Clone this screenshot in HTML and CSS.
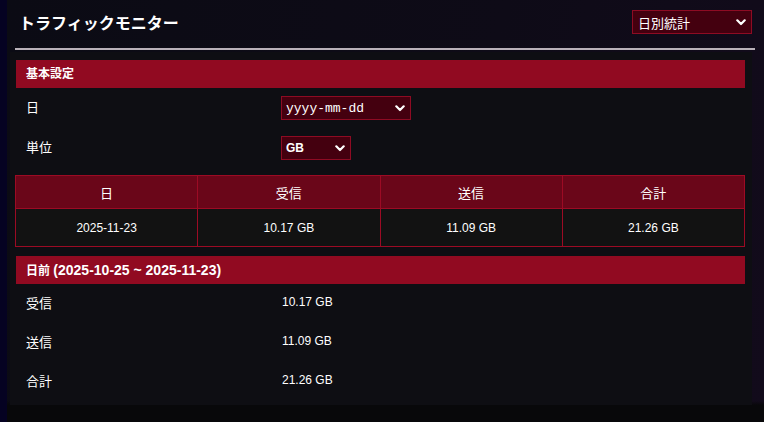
FILE: index.html
```html
<!DOCTYPE html>
<html lang="ja">
<head>
<meta charset="utf-8">
<title>トラフィックモニター</title>
<link rel="stylesheet" href="styles.css">
</head>
<body>
<div class="main">
  <header class="header">
    <h1 class="title">トラフィックモニター</h1>
    <div class="select select-mode">
      <span>日別統計</span>
      <svg class="chev" width="10" height="7" viewBox="0 0 10 7"><path d="M1.3 1.3 L5 5 L8.7 1.3" fill="none" stroke="#fff" stroke-width="2.2" stroke-linecap="round" stroke-linejoin="round"/></svg>
    </div>
  </header>
  <div class="panel">
    <div class="sec-title">基本設定</div>
    <div class="form-row">
      <div class="label">日</div>
      <div class="select select-date">
        <span>yyyy-mm-dd</span>
        <svg class="chev" width="10" height="7" viewBox="0 0 10 7"><path d="M1.3 1.3 L5 5 L8.7 1.3" fill="none" stroke="#fff" stroke-width="2.2" stroke-linecap="round" stroke-linejoin="round"/></svg>
      </div>
    </div>
    <div class="form-row">
      <div class="label">単位</div>
      <div class="select select-unit">
        <span>GB</span>
        <svg class="chev" width="10" height="7" viewBox="0 0 10 7"><path d="M1.3 1.3 L5 5 L8.7 1.3" fill="none" stroke="#fff" stroke-width="2.2" stroke-linecap="round" stroke-linejoin="round"/></svg>
      </div>
    </div>
    <table class="stats">
      <thead>
        <tr><th>日</th><th>受信</th><th>送信</th><th>合計</th></tr>
      </thead>
      <tbody>
        <tr><td>2025-11-23</td><td>10.17 GB</td><td>11.09 GB</td><td>21.26 GB</td></tr>
      </tbody>
    </table>
    <div class="sec-title sec-range">日前 <span class="range">(2025-10-25 ~ 2025-11-23)</span></div>
    <div class="sum-row"><div class="label">受信</div><div class="value">10.17 GB</div></div>
    <div class="sum-row"><div class="label">送信</div><div class="value">11.09 GB</div></div>
    <div class="sum-row"><div class="label">合計</div><div class="value">21.26 GB</div></div>
  </div>
</div>
</body>
</html>
```

FILE: styles.css
```css
* { box-sizing: border-box; }
html, body { margin: 0; padding: 0; }
body {
  background: #050222;
  color: #fff;
  font-family: "Liberation Sans", "Noto Sans CJK JP", sans-serif;
  font-size: 13px;
  width: 764px;
  height: 422px;
  overflow: hidden;
}
.main {
  margin-left: 7px;
  height: 422px;
  background: linear-gradient(180deg, rgba(0,0,0,0) 0%, rgba(0,0,0,0) 95%, #08080a 96%),
              linear-gradient(100deg, #0b0b14 0%, #0e0b17 60%, #120b1b 100%);
}
.header {
  display: flex;
  align-items: center;
  justify-content: space-between;
  margin: 0 9px 0 8px;
  padding: 10px 3px 14px 4px;
  border-bottom: 2px solid #b9b1b9;
}
.title {
  margin: 0;
  font-size: 16px;
  font-weight: bold;
  line-height: 24px;
  font-family: "Noto Sans CJK JP", "Liberation Sans", sans-serif;
}
.select {
  display: flex;
  align-items: center;
  justify-content: space-between;
  height: 24px;
  background: #44000f;
  border: 1px solid #8e0b23;
  color: #fff;
  padding: 0 5px 0 5px;
}
.select-mode { width: 120px; font-size: 13px; }
.select-date {
  width: 130px;
  font-family: "Liberation Mono", "DejaVu Sans Mono", monospace;
  font-size: 13px;
  padding-left: 4px;
}
.select-unit { width: 70px; font-size: 12px; font-weight: bold; padding-left: 4px; }
.chev { display: block; flex: none; }
.panel {
  margin: 2px 12px 0 3px;
  padding: 8px 7px 4px 6px;
  background: #0e0e13;
}
.sec-title {
  height: 28px;
  line-height: 28px;
  padding-left: 10px;
  background: #910a21;
  font-weight: bold;
  font-size: 12px;
}
.sec-range { margin-top: 9px; }
.sec-range .range { font-size: 14px; }
.form-row, .sum-row {
  display: flex;
  align-items: center;
  height: 40px;
}
.form-row .label { padding-bottom: 3px; }
.sum-row { height: 39px; padding-bottom: 3px; }
.label {
  width: 265px;
  padding-left: 10px;
  font-size: 13px;
}
.value { font-size: 12px; padding-left: 1px; }
.stats {
  width: 730px;
  margin: 7px 0 0 -1px;
  border-collapse: collapse;
  table-layout: fixed;
}
.stats th, .stats td {
  border: 1px solid #9c0b24;
  text-align: center;
  font-weight: normal;
  padding: 0;
}
.stats th {
  height: 33px;
  background: #6a0619;
  font-size: 13px;
}
.stats td {
  height: 38px;
  background: #121212;
  font-size: 12px;
}
```
